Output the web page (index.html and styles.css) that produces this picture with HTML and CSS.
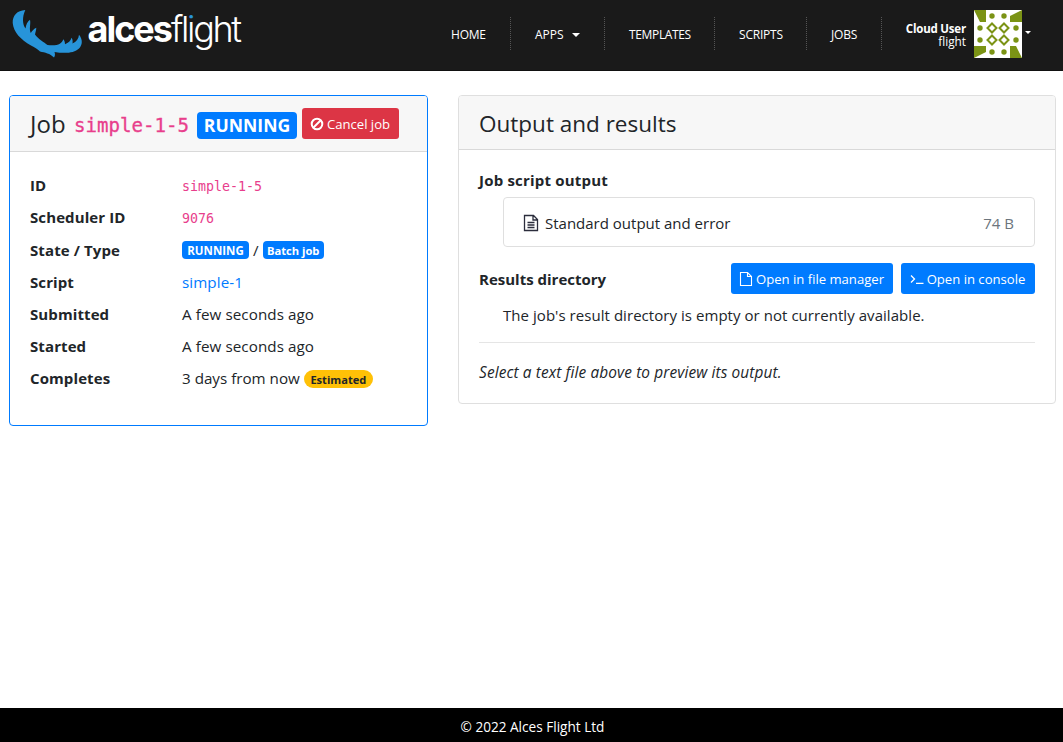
FILE: index.html
```html
<!DOCTYPE html>
<html lang="en">
<head>
<meta charset="utf-8">
<title>Job simple-1-5</title>
<link rel="stylesheet" href="styles.css">
</head>
<body>
<header class="topbar">
  <a class="brand" aria-label="alcesflight">
    <svg width="260" height="62" viewBox="0 0 260 62">
      <defs>
        <linearGradient id="dot" gradientUnits="userSpaceOnUse" x1="0" y1="0" x2="0" y2="62">
          <stop offset=".345" stop-color="#2794d9"/><stop offset=".345" stop-color="#fff"/>
        </linearGradient>
      </defs>
      <path fill="#2794d9" d="M25.300 10C17 10.500 12.500 15.500 12.700 23C13.500 32 20.500 39.500 31 45.500C35 47.500 38 49.500 40 51.500C45 52.500 50 53.500 54 57.500C55.200 56 55.200 54 54.500 52C64 53.500 74 53.500 79 48.500C82.500 45 83 39.500 79 34.700C78.500 39 76.500 41.500 72.500 43.500C72.800 41.500 72.800 39.500 71.500 37.800C70.500 41 68.500 43 65 44.200C65 42 64.500 40.500 63.300 39.200C62 43.500 57.500 46.300 47.500 45C44 42 38.500 39.500 35 34.500C35.500 32 36.300 29.500 36.300 27.700C33.500 29 32 31 30.800 33C29.800 31 29.800 29 30 26.500C30.200 24 30.500 22 30 19.800C27.500 21.500 26 24.500 25.500 28.500C22.500 24.500 22 17 25.300 10Z"/>
      <text x="87.500" y="42" class="logo"><tspan class="logo-bold">alces</tspan><tspan class="logo-light">fl</tspan><tspan class="logo-light" fill="url(#dot)">i</tspan><tspan class="logo-light">ght</tspan></text>
    </svg>
  </a>
  <nav class="menu">
    <a class="item home">HOME</a>
    <a class="item apps">APPS<i class="caret"></i></a>
    <a class="item templates">TEMPLATES</a>
    <a class="item scripts">SCRIPTS</a>
    <a class="item jobs">JOBS</a>
  </nav>
  <div class="user">
    <div class="who"><b>Cloud User</b><span>flight</span></div>
    <svg width="48" height="48" viewBox="0 0 48 48">
      <rect width="48" height="48" fill="#fff"/>
      <g fill="#7b9315">
        <path d="M0 0H12V12H6ZM48 0V12H36V6ZM0 36H12V42L0 48ZM36 36H42L48 48H36Z"/>
        <circle cx="18" cy="6" r="2.700"/><circle cx="30" cy="6" r="2.700"/>
        <circle cx="18" cy="42" r="2.700"/><circle cx="30" cy="42" r="2.700"/>
        <circle cx="6" cy="18" r="2.700"/><circle cx="6" cy="30" r="2.700"/>
        <circle cx="42" cy="18" r="2.700"/><circle cx="42" cy="30" r="2.700"/>
      </g>
      <path fill="none" stroke="#7b9315" stroke-width="2" d="M18 13.500l4.500 4.500-4.500 4.500-4.500-4.500zM30 13.500l4.500 4.500-4.500 4.500-4.500-4.500zM18 25.500l4.500 4.500-4.500 4.500-4.500-4.500zM30 25.500l4.500 4.500-4.500 4.500-4.500-4.500z"/>
    </svg>
    <i class="caret small"></i>
  </div>
</header>

<main class="page">
  <section class="card job">
    <h1 class="card-header job-header">
      <span class="job-word">Job</span>
      <code class="job-code">simple-1-5</code>
      <span class="badge big">RUNNING</span>
      <a class="btn danger"><svg width="14" height="14" viewBox="0 0 14 14" fill="none" stroke="#fff" stroke-width="2"><circle cx="7" cy="7" r="5.300"/><path d="M3.500 10.500l7-7"/></svg><span>Cancel job</span></a>
    </h1>
    <dl class="details">
      <dt>ID</dt><dd><code>simple-1-5</code></dd>
      <dt>Scheduler ID</dt><dd><code>9076</code></dd>
      <dt class="state">State / Type</dt><dd class="state"><span class="badge run">RUNNING</span><span>/</span><span class="badge batch">Batch job</span></dd>
      <dt>Script</dt><dd><a class="link">simple-1</a></dd>
      <dt>Submitted</dt><dd>A few seconds ago</dd>
      <dt>Started</dt><dd>A few seconds ago</dd>
      <dt>Completes</dt><dd><span class="when">3 days from now</span><span class="badge pill">Estimated</span></dd>
    </dl>
  </section>

  <section class="card output">
    <h2 class="card-header output-header">Output and results</h2>
    <div class="output-body">
      <h3 class="label script-label">Job script output</h3>
      <a class="file">
        <svg width="16" height="18" viewBox="0 0 16 18" fill="none" stroke="#2b2d3c" stroke-width="1.300"><path d="M1.500 1.500H10.500L14.500 5.500V16.500H1.500ZM10 2V6H14M4.500 8.500H11.500M4.500 11H11.500M4.500 13.500H11.500"/></svg>
        <span class="file-name">Standard output and error</span>
        <span class="size">74 B</span>
      </a>
      <div class="results">
        <h3 class="label">Results directory</h3>
        <a class="btn primary manager"><svg width="14" height="16" viewBox="0 0 14 16" fill="none" stroke="#fff" stroke-width="1.100"><path d="M1.500 1.500H8.500L12.500 5.500V14.500H1.500ZM8.500 1.500V5.500H12.500"/></svg><span>Open in file manager</span></a>
        <a class="btn primary console"><svg width="14" height="14" viewBox="0 0 14 14" fill="none" stroke="#fff" stroke-width="1.300"><path d="M1 3.500L4.500 7L1 10.500M6 11.300H13.500"/></svg><span>Open in console</span></a>
      </div>
      <p class="empty">The job's result directory is empty or not currently available.</p>
      <hr class="rule">
      <p class="hint">Select a text file above to preview its output.</p>
    </div>
  </section>
</main>

<footer class="footer">© 2022 Alces Flight Ltd</footer>
</body>
</html>
```
FILE: styles.css
```css
* { box-sizing: border-box; }
body {
  margin: 0;
  height: 742px;
  display: flex;
  flex-direction: column;
  background: #fff;
  color: #212529;
  font: 15px/24px "Open Sans", "Noto Sans", sans-serif;
}
h1, h2, h3, p, dl, dd { margin: 0; }
code { font-family: "DejaVu Sans Mono", monospace; font-size: 13.3px; color: #e83e8c; }

.topbar {
  height: 71px;
  flex: none;
  display: flex;
  background: #1a1a1a;
  border-bottom: 1px solid #111;
  color: #fff;
}
.brand { width: 427px; flex: none; }
.logo { font-family: Inter, sans-serif; font-size: 36px; fill: #fff; }
.logo-bold { font-weight: 700; letter-spacing: -2px; }
.logo-light { font-weight: 300; letter-spacing: -2.35px; }
.menu { display: flex; padding-top: 17px; }
.item {
  height: 33px;
  display: flex;
  align-items: center;
  padding: 2px 0 0 24px;
  border-right: 1px dotted #555;
  font-size: 12px;
  letter-spacing: -0.2px;
}
.home { width: 84px; }
.apps { width: 94px; letter-spacing: 0; }
.templates { width: 110px; letter-spacing: -0.35px; }
.scripts { width: 92px; }
.jobs { width: 75px; }
.caret {
  margin-left: 8px;
  border: 4px solid transparent;
  border-top-color: #fff;
  border-bottom: 0;
}
.caret.small { margin: -3px 0 0 3px; border-width: 3px 3px 0; }
.user { display: flex; align-items: center; height: 68px; padding-left: 20px; }
.who {
  width: 64px;
  margin-right: 8px;
  display: flex;
  flex-direction: column;
  align-items: flex-end;
  white-space: nowrap;
  font-size: 11.8px;
  line-height: 12px;
  padding-top: 2px;
}
.who b { font-size: 11.5px; letter-spacing: -0.2px; }

.page { flex: 1; display: flex; align-items: flex-start; gap: 30px; padding: 24px 0 0 9px; }
.card { border: 1px solid #dfdfdf; border-radius: 4px; overflow: hidden; }
.job { width: 419px; height: 331px; border-color: #007bff; }
.output { width: 598px; height: 309px; }
.card-header { background: #f7f7f7; border-bottom: 1px solid #d9d9d9; font-weight: 400; white-space: nowrap; }
.job-header { height: 56px; display: flex; align-items: center; padding-left: 20px; }
.job-word { font-size: 24px; margin-right: 8px; width: 36px; }
.job-code { font-size: 19.1px; margin-right: 8px; width: 115px; padding-top: 5px; -webkit-text-stroke: 0.3px #e83e8c; }
.output-header { height: 54px; padding: 0 20px; font-size: 22.5px; line-height: 55px; }

.badge {
  display: inline-flex;
  align-items: center;
  justify-content: center;
  height: 18px;
  padding-top: 2px;
  border-radius: 4px;
  background: #007bff;
  color: #fff;
  font-size: 11.5px;
  font-weight: 700;
  line-height: 18px;
}
.big { width: 100px; height: 27px; margin: 4px 5px 0 0; padding: 0 0 1px; font-size: 17.6px; }
.run { width: 67px; margin-top: 1px; }
.batch { width: 61px; margin-top: 1px; font-size: 11.2px; }
.pill { width: 69px; border-radius: 9px; background: #ffc107; color: #212529; margin-top: 2px; font-size: 11.1px; }
.btn {
  height: 31px;
  display: flex;
  align-items: center;
  justify-content: center;
  gap: 3px;
  border-radius: 3px;
  color: #fff;
  font-size: 13.1px;
  line-height: 21px;
  white-space: nowrap;
}
.btn span { padding-top: 2px; }
.btn svg { margin-left: -1px; }
.danger { width: 97px; background: #dc3545; }
.primary { background: #007bff; }
.manager { width: 162px; margin-left: auto; }
.console { width: 134px; margin-left: 8px; }

.details { display: grid; grid-template-columns: 152px 1fr; padding: 17px 20px; }
.details dt { height: 32px; line-height: 32px; font-weight: 700; letter-spacing: 0.1px; }
.details dd { height: 32px; display: flex; align-items: center; gap: 4px; font-size: 15.2px; letter-spacing: 0.08px; }
.details .state { height: 33px; line-height: 34px; }
.details dd code { padding-top: 4px; letter-spacing: 0; }
.details .badge { letter-spacing: 0; }
.when { letter-spacing: 0; }
.link { color: #007bff; }

.output-body { padding: 18px 20px; }
.label { font-size: 15px; font-weight: 700; line-height: 24px; }
.script-label { letter-spacing: 0.2px; }
.file {
  height: 50px;
  display: flex;
  align-items: center;
  margin: 5px 0 16px 24px;
  padding: 2px 20px 0 19px;
  border: 1px solid #dfdfdf;
  border-radius: 4px;
}
.file-name { margin-left: 6px; }
.size { margin-left: auto; color: #6c757d; }
.results { display: flex; align-items: center; height: 31px; }
.empty { margin: 9px 0 0 24px; letter-spacing: 0.05px; }
.rule { margin: 15px 0 18px; border: 0; border-top: 1px solid #e5e5e5; }
.hint { font-style: italic; font-size: 15.4px; letter-spacing: 0.12px; }
.footer {
  flex: none;
  height: 34px;
  background: #000;
  color: #fff;
  text-align: center;
  font-size: 13.6px;
  line-height: 38px;
  padding-left: 2px;
}
```
